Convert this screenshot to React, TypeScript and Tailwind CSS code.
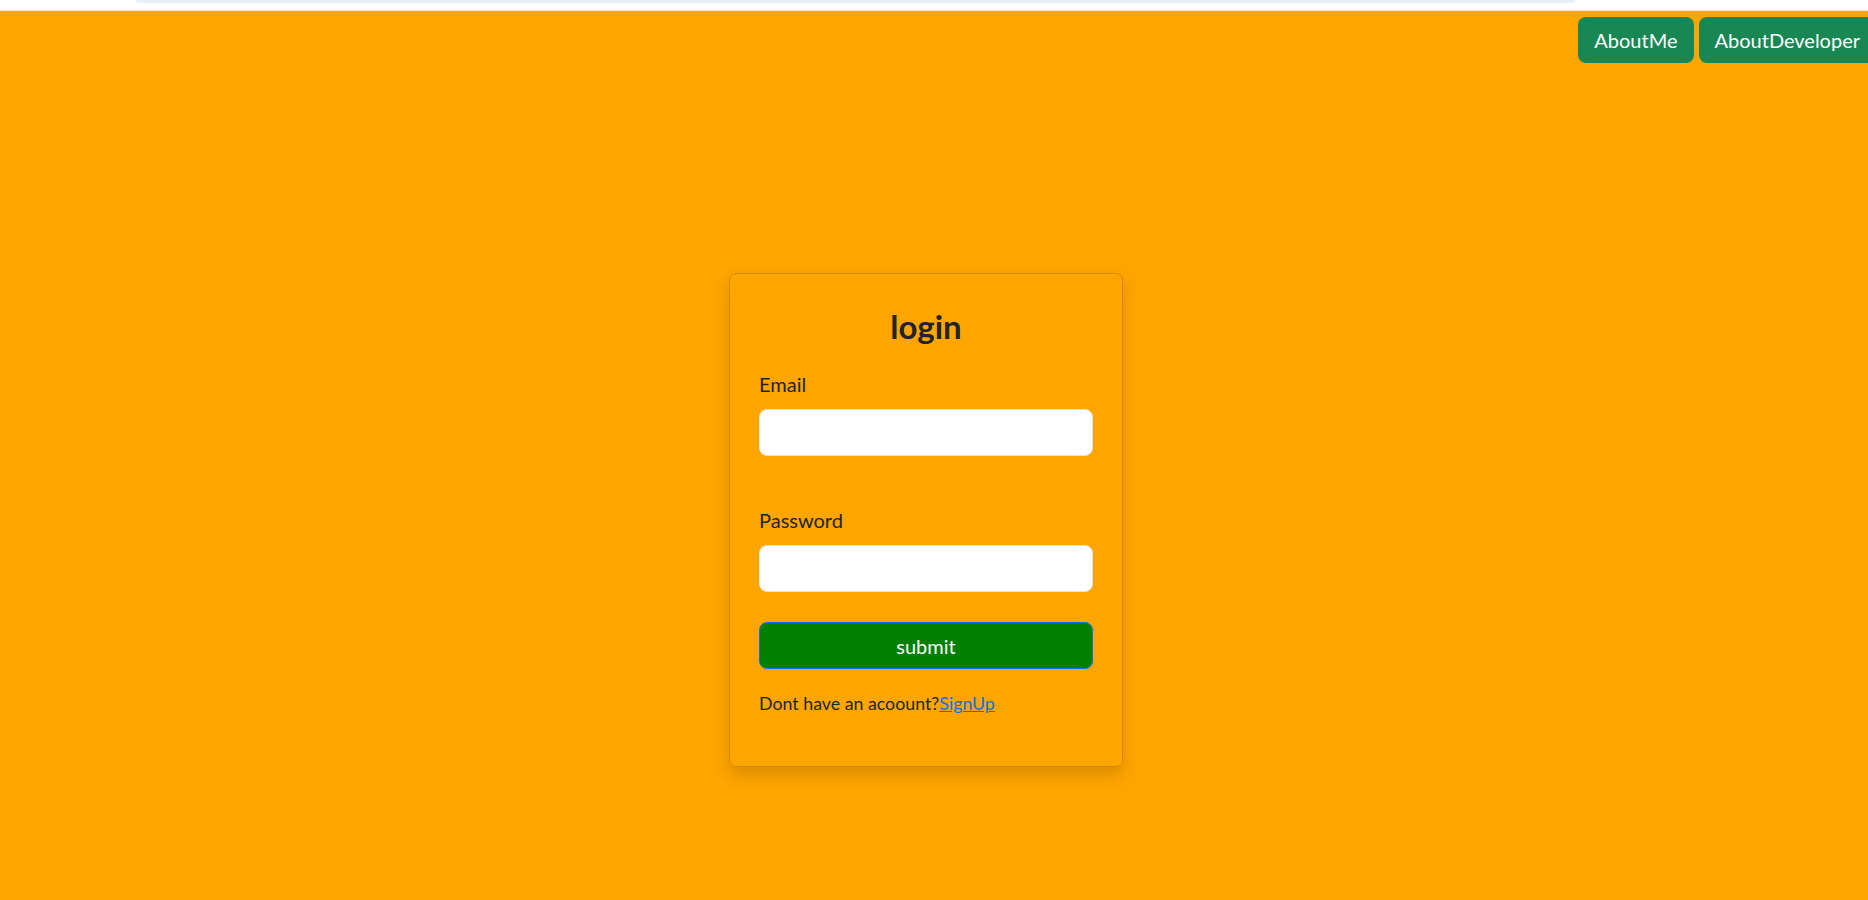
import { useState } from 'react';

export default function App() {
  const [email, setEmail] = useState('');
  const [password, setPassword] = useState('');

  return (
    <div className="min-h-screen bg-white overflow-x-hidden font-['Lato','Liberation_Sans',sans-serif]">
      {/* browser strip at the top */}
      <div className="h-[11px] bg-white border-b border-[#f3e6cc] pl-[136px] pr-[293px]">
        <div className="h-[3px] bg-[#e9eef8] rounded-b-[4px]" />
      </div>

      <div className="bg-[#FFA500] min-h-[889px] pt-[6px]">
        <nav className="flex justify-end gap-[5px] -mr-[8px]">
          <button className="h-[46px] px-4 rounded-lg bg-[#198754] text-white text-[20px] leading-[30px]">
            AboutMe
          </button>
          <button className="h-[46px] px-4 rounded-lg bg-[#198754] text-white text-[20px] leading-[30px] whitespace-nowrap">
            AboutDeveloper
          </button>
        </nav>

        <div className="ml-[729px] mt-[210px] w-[394px] border border-[#d48a00] rounded-[7px] shadow-[0_8px_16px_rgba(0,0,0,0.15)] px-[29px] pt-[33px] pb-[50px] text-[#212529]">
          <h3 className="text-center font-bold text-[33px] leading-[38px] mb-[24px]">login</h3>

          <label className="block text-[20px] leading-[30px] mb-[10px]">Email</label>
          <input
            type="email"
            value={email}
            onChange={e => setEmail(e.target.value)}
            className="block w-full h-[47px] bg-white border border-[#dee2e6] rounded-lg px-4 text-[20px] outline-none"
          />

          <label className="block text-[20px] leading-[30px] mt-[49px] mb-[10px]">Password</label>
          <input
            type="password"
            value={password}
            onChange={e => setPassword(e.target.value)}
            className="block w-full h-[47px] bg-white border border-[#dee2e6] rounded-lg px-4 text-[20px] outline-none"
          />

          <button className="block w-full h-[47px] mt-[30px] bg-[#008000] border border-[#0d6efd] rounded-lg text-white text-[20px]">
            submit
          </button>

          <p className="mt-[21px] text-[17.8px] leading-[26px]">
            Dont have an acoount?<a href="#" className="text-[#0d6efd] underline">SignUp</a>
          </p>
        </div>
      </div>
    </div>
  );
}
